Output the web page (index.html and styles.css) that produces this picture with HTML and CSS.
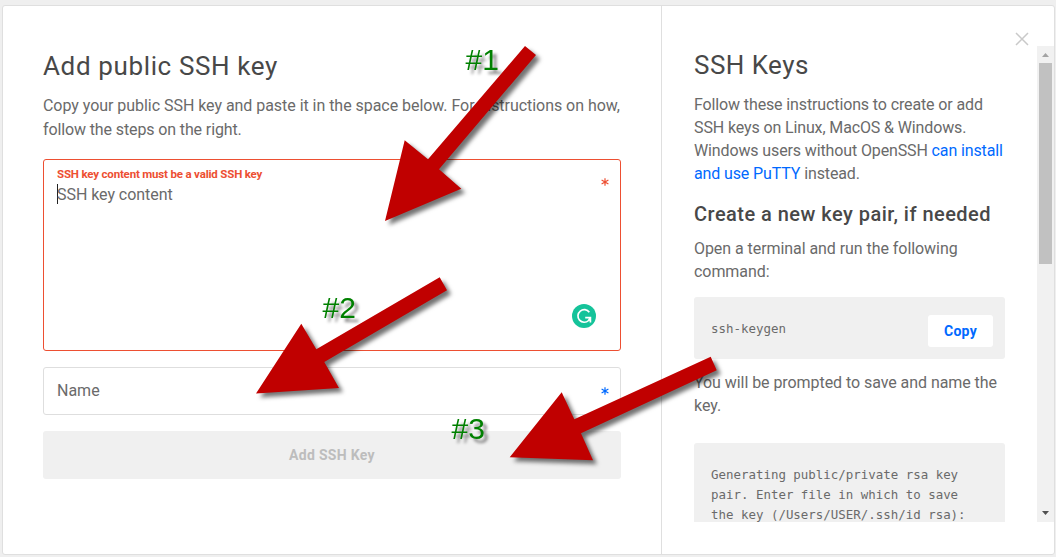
FILE: index.html
```html
<!DOCTYPE html>
<html lang="en">
<head>
<meta charset="utf-8">
<title>Add public SSH key</title>
<link rel="stylesheet" href="styles.css">
</head>
<body>
<main class="modal">
  <section class="form">
    <h1 class="title title-form">Add public SSH key</h1>
    <p class="intro"><span class="intro-a">Copy your public SSH key and paste it in the space below. For instructions on how,</span><br><span class="intro-b">follow the steps on the right.</span></p>
    <div class="field field-key">
      <div class="field-body">
        <span class="error">SSH key content must be a valid SSH key</span>
        <span class="placeholder caret">SSH key content</span>
      </div>
      <div class="field-side">
        <svg class="star star-red" viewBox="0 0 8 8"><path d="M4 .2v7.6M.6 2.1l6.8 3.8M.6 5.9l6.8-3.8"/></svg>
        <svg class="checker" viewBox="0 0 24 24"><circle cx="12" cy="12" r="12" fill="#15c39a"/><path d="M17.3 8.2A6.3 6.3 0 1 0 16.6 16.5L18 14.2M13.2 13.6h5.2v4.8" fill="none" stroke="#fff" stroke-width="1.7"/></svg>
      </div>
    </div>
    <div class="field field-name">
      <span class="placeholder name">Name</span>
      <svg class="star star-blue" viewBox="0 0 8 8"><path d="M4 .2v7.6M.6 2.1l6.8 3.8M.6 5.9l6.8-3.8"/></svg>
    </div>
    <button class="submit" disabled>Add SSH Key</button>
  </section>
  <aside class="help">
    <div class="help-top">
      <svg class="close" viewBox="0 0 14 14"><path d="M1 1l12 12M13 1L1 13"/></svg>
    </div>
    <div class="help-main">
      <div class="help-text">
        <h2 class="title title-help">SSH Keys</h2>
        <p class="para para-intro">Follow these instructions to create or add<br>SSH keys on Linux, MacOS &amp; Windows.<br>Windows users without OpenSSH <a class="link">can install</a><br><a class="link">and use PuTTY</a> instead.</p>
        <h3 class="subtitle">Create a new key pair, if needed</h3>
        <p class="para">Open a terminal and run the following<br>command:</p>
        <div class="code code-command"><code>ssh-keygen</code><button class="copy">Copy</button></div>
        <p class="para">You will be prompted to save and name the<br>key.</p>
        <div class="code code-output"><code>Generating public/private rsa key<br>pair. Enter file in which to save<br>the key (/Users/USER/.ssh/id rsa):</code></div>
      </div>
      <div class="scrollbar">
        <svg class="arrow" viewBox="0 0 17 17"><path d="M5 11h7L8.5 7z" fill="#a3a3a3"/></svg>
        <div class="thumb"></div>
        <svg class="arrow" viewBox="0 0 17 17"><path d="M5 6h7l-3.500 4z" fill="#505050"/></svg>
      </div>
    </div>
  </aside>
</main>
<svg class="notes" viewBox="0 0 1056 557">
  <g class="note-label">
    <text x="465.500" y="70">#1</text>
    <text x="322.500" y="318">#2</text>
    <text x="451.500" y="439">#3</text>
  </g>
  <g class="note-arrow">
    <path d="M525 46L536 55L439 169.300L461.300 188.700L385 221L404.700 140.300L428 159.300Z"/>
    <path d="M439.700 277.300L447 290.300L324.300 362L339 388L256 393.500L301.300 323.700L316.300 349.300Z"/>
    <path d="M710.700 356.700L716.700 370.300L581 433.300L593 460.300L509.700 457.300L561.700 392.300L574.300 419.300Z"/>
  </g>
</svg>
</body>
</html>
```
FILE: styles.css
```css
* { box-sizing: border-box; }
body {
  margin: 0;
  height: 557px;
  padding: 5px 1px 2px 2px;
  overflow: hidden;
  background: #efefef;
  color: #6a6a6a;
  font-family: Roboto, "Open Sans", sans-serif;
  font-size: 16px;
}
h1, h2, h3, p { margin: 0; font-weight: 400; }
.modal {
  display: flex;
  height: 550px;
  background: #fff;
  border: 1px solid #dfdfdf;
  border-radius: 3px;
}
.form { width: 658px; padding: 40px 40px 0; }
.title { height: 40px; line-height: 40px; font-size: 26px; color: #484848; white-space: nowrap; letter-spacing: .630px; }
.title-help { letter-spacing: .450px; }
.intro { margin: 8px 0 17px; line-height: 24px; white-space: nowrap; }
.intro-a { letter-spacing: -.042px; }
.intro-b { letter-spacing: -.120px; }
.field { width: 578px; border: 1px solid #dedede; border-radius: 3px; display: flex; justify-content: space-between; }
.field-key { height: 192px; border-color: #ed4f32; padding: 6px 11px 0 13px; }
.field-body { display: flex; flex-direction: column; }
.error { height: 17px; line-height: 17px; color: #ed4f32; font-size: 11.500px; font-weight: 700; letter-spacing: -.180px; }
.placeholder { line-height: 22px; color: #6a6a6a; }
.caret { height: 20px; border-left: 1px solid #222; margin-top: 1px; line-height: 21px; letter-spacing: -.050px; text-indent: -1px; }
.field-side { display: flex; flex-direction: column; align-items: flex-end; }
.star { width: 8px; height: 8px; fill: none; stroke-width: 1.200; }
.star-red { stroke: #ed4f32; margin-top: 12px; }
.star-blue { stroke: #0069ff; }
.checker { width: 24px; height: 24px; margin: 118px 13px 0 0; }
.field-name { height: 48px; margin-top: 16px; padding: 0 11px 0 13px; align-items: center; }
.submit { display: block; width: 578px; height: 48px; margin-top: 16px; border: 0; border-radius: 3px; background: #f0f0f0; color: #bdbdbd; font: 700 14px Roboto, sans-serif; letter-spacing: .300px; }
.help { flex: 1; border-left: 1px solid #dfdfdf; }
.help-top { height: 40px; display: flex; justify-content: flex-end; padding: 26px 25px 0 0; }
.close { width: 14px; height: 14px; fill: none; stroke: #c9c9c9; stroke-width: 1.500; }
.help-main { display: flex; justify-content: space-between; height: 476px; overflow: hidden; }
.help-text { width: 343px; padding-left: 32px; white-space: nowrap; }
.para { line-height: 23px; letter-spacing: -.060px; }
.para-intro { letter-spacing: -.125px; }
.title-help { margin-top: -1px; margin-bottom: 8px; }
.link { color: #0069ff; }
.subtitle { margin: 15px 0 8px; height: 29px; line-height: 29px; font-size: 20px; font-weight: 500; color: #484848; letter-spacing: .470px; }
.code { width: 311px; background: #f0f0f0; border-radius: 3px; }
.code code { display: block; font: 12.450px/20px "DejaVu Sans Mono", monospace; color: #6a6a6a; }
.code-command { height: 62px; margin: 14px 0 12px; padding: 0 12px 0 17px; display: flex; justify-content: space-between; align-items: center; }
.code-command code { padding-top: 2px; }
.copy { width: 65px; height: 32px; margin-top: 6px; border: 0; border-radius: 3px; background: #fff; color: #0069ff; font: 700 14px Roboto, sans-serif; letter-spacing: .300px; }
.code-output { height: 79px; margin-top: 26px; padding: 22px 17px 0; border-radius: 3px 3px 0 0; }
.scrollbar { width: 17px; background: #f1f1f1; display: flex; flex-direction: column; }
.arrow { width: 17px; height: 17px; }
.thumb { width: 13px; height: 201px; margin: 0 2px auto; background: #c1c1c1; }
.notes { position: absolute; left: 0; top: 0; width: 1056px; height: 557px; }
.note-label { font: 30px "Liberation Sans", sans-serif; fill: #008000; filter: drop-shadow(4px 4px 1.500px rgba(0, 0, 0, .45)); }
.note-arrow { fill: #c00000; filter: drop-shadow(4px 4px 2px rgba(0, 0, 0, .55)); }
```
